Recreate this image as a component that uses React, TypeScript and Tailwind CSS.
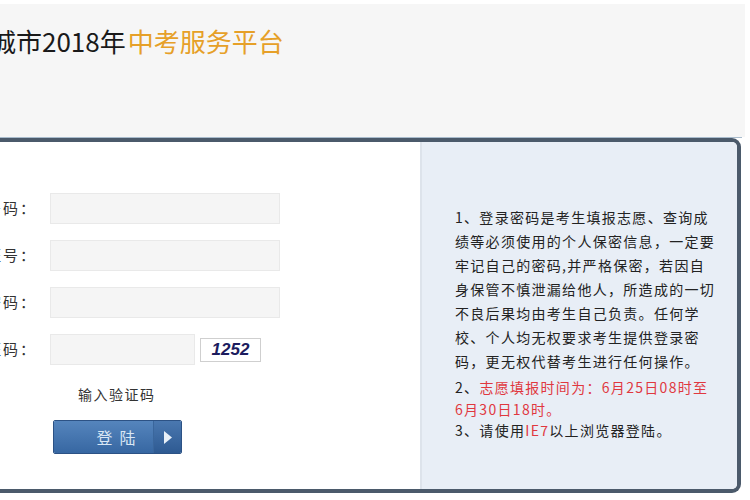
import React from "react";

const cjk = { fontFamily: '"Noto Sans CJK SC", "Noto Sans", sans-serif' };

function Row({ label, short }: { label: string; short?: boolean }) {
  return (
    <div className="flex items-center h-[31px]">
      <div className="w-[47px] overflow-hidden flex justify-end">
        <span className="whitespace-nowrap text-[15px] tracking-[2px] text-[#333]">{label}</span>
      </div>
      <div
        className={
          "ml-[13px] h-[31px] bg-[#f5f5f5] border border-[#e9e9e9] " +
          (short ? "w-[145px]" : "w-[230px]")
        }
      />
      {short && (
        <div className="ml-[5px] w-[61px] h-[24px] bg-white border border-[#cfcfcf] flex items-center justify-center">
          <span
            className="text-[17px] font-bold italic text-[#1c1c5e] leading-none"
            style={{ fontFamily: '"Liberation Sans", Arial, sans-serif' }}
          >
            1252
          </span>
        </div>
      )}
    </div>
  );
}

export default function App() {
  return (
    <div className="w-[750px] h-[500px] bg-white overflow-hidden" style={cjk}>
      <div className="mt-[4px] h-[133px] w-[745px] bg-[#f6f6f6] pt-[21px] overflow-hidden">
        <div className="ml-[-10px] flex items-center h-[32px] text-[26px] leading-[32px] whitespace-nowrap">
          <span className="text-[#1a1a1a]">城市2018年</span>
          <span className="ml-[2px] text-[#e6a028]">中考服务平台</span>
        </div>
      </div>
      <div className="h-px w-[742px] bg-[#a9bccd]" />
      <div className="ml-[-10px] w-[751px] h-[355px] border-t-[4px] border-r-[4px] border-b-[4px] border-[#4b5a6b] rounded-tr-[9px] rounded-br-[9px] flex overflow-hidden">
        <div className="w-[430px] bg-white pt-[51px]">
          <div className="flex flex-col gap-[16px]">
            <Row label="准考证号码：" />
            <Row label="身份证号：" />
            <Row label="登录密码：" />
            <Row label="验证码：" short />
          </div>
          <div className="mt-[19px] ml-[88px] text-[14px] leading-[20px] tracking-[1.5px] text-[#333]">
            输入验证码
          </div>
          <div className="mt-[16px] ml-[63px] w-[129px] h-[34px] flex border border-[#2c5285] rounded-[2px] overflow-hidden">
            <div className="flex-1 flex items-center justify-center bg-gradient-to-b from-[#5585bd] to-[#3767a2]">
              <span className="ml-[32px] text-[16px] tracking-[7px] text-[#d9e6f4]">登陆</span>
            </div>
            <div className="w-[28px] flex items-center justify-center bg-gradient-to-b from-[#4a78b0] to-[#2e5a92] border-l border-[#3a669c]">
              <svg width="8" height="13" viewBox="0 0 8 13">
                <polygon points="0,0 8,6.5 0,13" fill="#e8f0f8" />
              </svg>
            </div>
          </div>
        </div>
        <div className="flex-1 bg-[#e8eef6] border-l-2 border-[#dde3eb] pt-[63px] pl-[33px] text-[14px] tracking-[1.3px] text-[#222] whitespace-nowrap">
          <div className="leading-[24px]">
            <div>1、登录密码是考生填报志愿、查询成</div>
            <div>绩等必须使用的个人保密信息，一定要</div>
            <div>牢记自己的密码,并严格保密，若因自</div>
            <div>身保管不慎泄漏给他人，所造成的一切</div>
            <div>不良后果均由考生自己负责。任何学</div>
            <div>校、个人均无权要求考生提供登录密</div>
            <div>码，更无权代替考生进行任何操作。</div>
          </div>
          <div className="leading-[22px] mt-[3px]">
            <div>
              2、<span className="text-[#e0383f]">志愿填报时间为：6月25日08时至</span>
            </div>
            <div className="text-[#e0383f]">6月30日18时。</div>
          </div>
          <div className="leading-[21px]">
            3、请使用<span className="text-[#e0383f]">IE7</span>以上浏览器登陆。
          </div>
        </div>
      </div>
    </div>
  );
}
